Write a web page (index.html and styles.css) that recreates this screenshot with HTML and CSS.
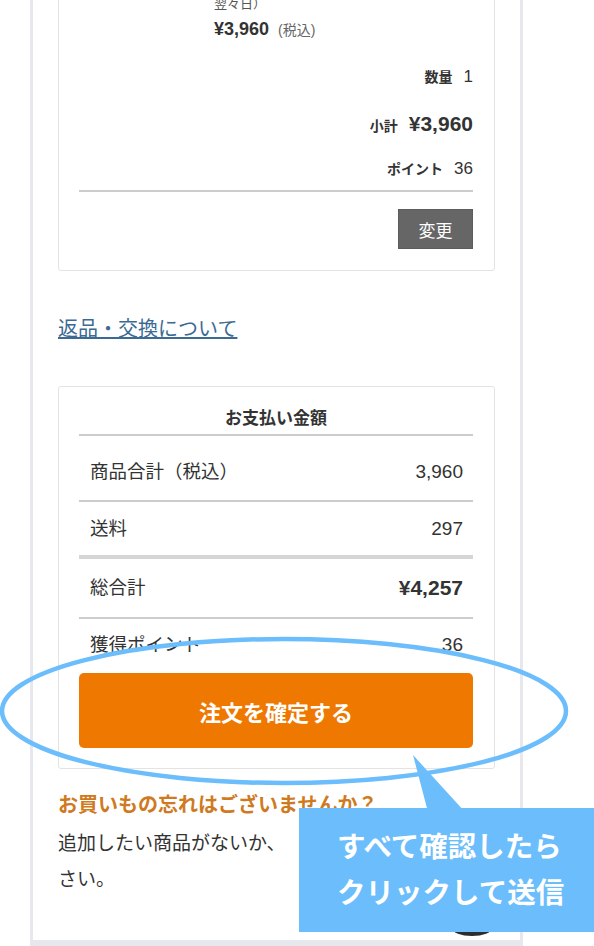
FILE: index.html
```html
<!DOCTYPE html>
<html lang="ja">
<head>
<meta charset="utf-8">
<title>ご注文内容の確認</title>
<link rel="stylesheet" href="styles.css">
</head>
<body>
<div class="frame">
  <section class="card item-card">
    <div class="product">
      <div class="thumb"></div>
      <div class="info">
        <p class="name">オリジナルブレンド コーヒー豆<br>200g</p>
        <p class="delivery">（お届け目安：ご注文日の<br>翌々日）</p>
        <p class="price"><span class="price-num">¥3,960</span><span class="tax">(税込)</span></p>
      </div>
    </div>
    <div class="details">
      <div class="d-row"><span class="d-label">数量</span><span class="d-val">1</span></div>
      <div class="d-row sub"><span class="d-label">小計</span><span class="d-val big">¥3,960</span></div>
      <div class="d-row pts"><span class="d-label">ポイント</span><span class="d-val">36</span></div>
    </div>
    <div class="actions"><button class="btn-change" type="button">変更</button></div>
  </section>

  <a class="return-link" href="#">返品・交換について</a>

  <section class="card pay-card">
    <h2 class="pay-title">お支払い金額</h2>
    <div class="pay-row r1"><span class="pay-label">商品合計（税込）</span><span class="pay-val">3,960</span></div>
    <div class="pay-row r2"><span class="pay-label">送料</span><span class="pay-val">297</span></div>
    <div class="pay-row r3"><span class="pay-label">総合計</span><span class="pay-val total">¥4,257</span></div>
    <div class="pay-row r4"><span class="pay-label">獲得ポイント</span><span class="pay-val">36</span></div>
    <button class="btn-order" type="button">注文を確定する</button>
  </section>

  <p class="reminder-title">お買いもの忘れはございませんか？</p>
  <p class="reminder-text">追加したい商品がないか、　カート内をご確認ください。</p>
</div>

<div class="chat-btn"></div>
<svg class="annot" width="594" height="946" viewBox="0 0 594 946" aria-hidden="true">
  <ellipse cx="284" cy="711" rx="282" ry="72" fill="none" stroke="#6bbdfb" stroke-width="4.5"/>
  <polygon points="413,755 428,812 465,812" fill="#6bbdfb"/>
</svg>
<div class="callout">すべて確認したら<br>クリックして送信</div>
</body>
</html>
```

FILE: styles.css
```css
html {
  overflow: hidden;
}

body {
  margin: 0;
  background: #ffffff;
  color: #333333;
  font-family: "Liberation Sans", "Noto Sans CJK JP", sans-serif;
}

p {
  margin: 0;
}

.frame {
  width: 493px;
  box-sizing: border-box;
  margin: -118px 0 0 30px;
  padding: 20px 25px 42px;
  border: 3px solid #e6e8ee;
  border-top: none;
  border-bottom-width: 6px;
  background: #ffffff;
}

.card {
  border: 1px solid #e3e3e3;
  border-radius: 3px;
  padding: 20px 21px 21px 20px;
  background: #ffffff;
}

/* item card */
.product {
  display: flex;
  gap: 15px;
}

.thumb {
  flex: none;
  width: 120px;
  height: 48px;
  background: #f3f3f3;
}

.info {
  padding-top: 7px;
}

.name {
  font-size: 14px;
  line-height: 22px;
}

.delivery {
  font-size: 13px;
  line-height: 20px;
  color: #555555;
}

.price {
  margin-top: 1px;
  line-height: 28px;
}

.price-num {
  font-size: 18px;
  font-weight: 700;
  color: #333333;
}

.tax {
  margin-left: 9px;
  font-size: 14px;
  color: #666666;
}

.details {
  margin-top: 18px;
  padding-bottom: 6px;
  border-bottom: 2px solid #cccccc;
}

.d-row {
  display: flex;
  justify-content: flex-end;
  align-items: baseline;
  gap: 11px;
  line-height: 30px;
}

.d-row.sub {
  margin-top: 17px;
}

.d-row.pts {
  margin-top: 13px;
}

.d-label {
  font-size: 14px;
  font-weight: 700;
}

.d-val {
  font-size: 17px;
}

.d-val.big {
  font-size: 21px;
  font-weight: 700;
}

.actions {
  display: flex;
  justify-content: flex-end;
  margin-top: 17px;
}

.btn-change {
  width: 75px;
  height: 40px;
  padding: 0;
  border: 1px solid #5c5c5c;
  background: #666666;
  color: #ffffff;
  font-family: inherit;
  font-size: 17px;
}

/* link */
.return-link {
  display: block;
  width: fit-content;
  margin-top: 43px;
  font-size: 20px;
  line-height: 30px;
  color: #3b6a93;
  text-decoration: underline;
}

/* payment card */
.pay-card {
  margin-top: 42px;
  padding-top: 0;
  padding-bottom: 20px;
}

.pay-title {
  margin: 0;
  padding: 20px 0 3px;
  border-bottom: 2px solid #cccccc;
  font-size: 17px;
  font-weight: 700;
  line-height: 24px;
  text-align: center;
}

.pay-row {
  display: flex;
  justify-content: space-between;
  align-items: center;
  padding: 14px 10px 13px 11px;
  line-height: 26px;
  border-bottom: 2px solid #cccccc;
}

.pay-row.r1 {
  padding-top: 23px;
  padding-bottom: 15px;
}

.pay-row.r2 {
  border-bottom: 4px solid #d5d5d5;
}

.pay-row.r3 {
  padding-top: 16px;
  padding-bottom: 16px;
}

.pay-row.r4 {
  padding-top: 13px;
  padding-bottom: 15px;
  border-bottom: none;
}

.pay-label {
  font-size: 18.5px;
}

.pay-val {
  font-size: 19px;
}

.pay-val.total {
  font-size: 21px;
  font-weight: 700;
}

.btn-order {
  display: block;
  width: 100%;
  height: 75px;
  padding: 0;
  border: none;
  border-radius: 5px;
  background: #ee7800;
  color: #ffffff;
  font-family: inherit;
  font-size: 22px;
  font-weight: 700;
}

/* reminder */
.reminder-title {
  margin-top: 18px;
  font-size: 20px;
  font-weight: 700;
  line-height: 36px;
  color: #cf7a1f;
}

.reminder-text {
  margin-top: 3px;
  margin-right: -10px;
  font-size: 19px;
  line-height: 36px;
  text-spacing-trim: space-all;
}

/* overlays */
.chat-btn {
  position: absolute;
  left: 452px;
  top: 920px;
  width: 40px;
  height: 16px;
  border-radius: 50%;
  background: #2d2d2d;
}

.annot {
  position: absolute;
  left: 0;
  top: 0;
  pointer-events: none;
}

.callout {
  position: absolute;
  left: 299px;
  top: 808px;
  width: 295px;
  height: 124px;
  box-sizing: border-box;
  padding: 16px 0 0 38px;
  background: #6bbdfb;
  color: #ffffff;
  font-size: 28.5px;
  font-weight: 700;
  line-height: 46px;
}
```
